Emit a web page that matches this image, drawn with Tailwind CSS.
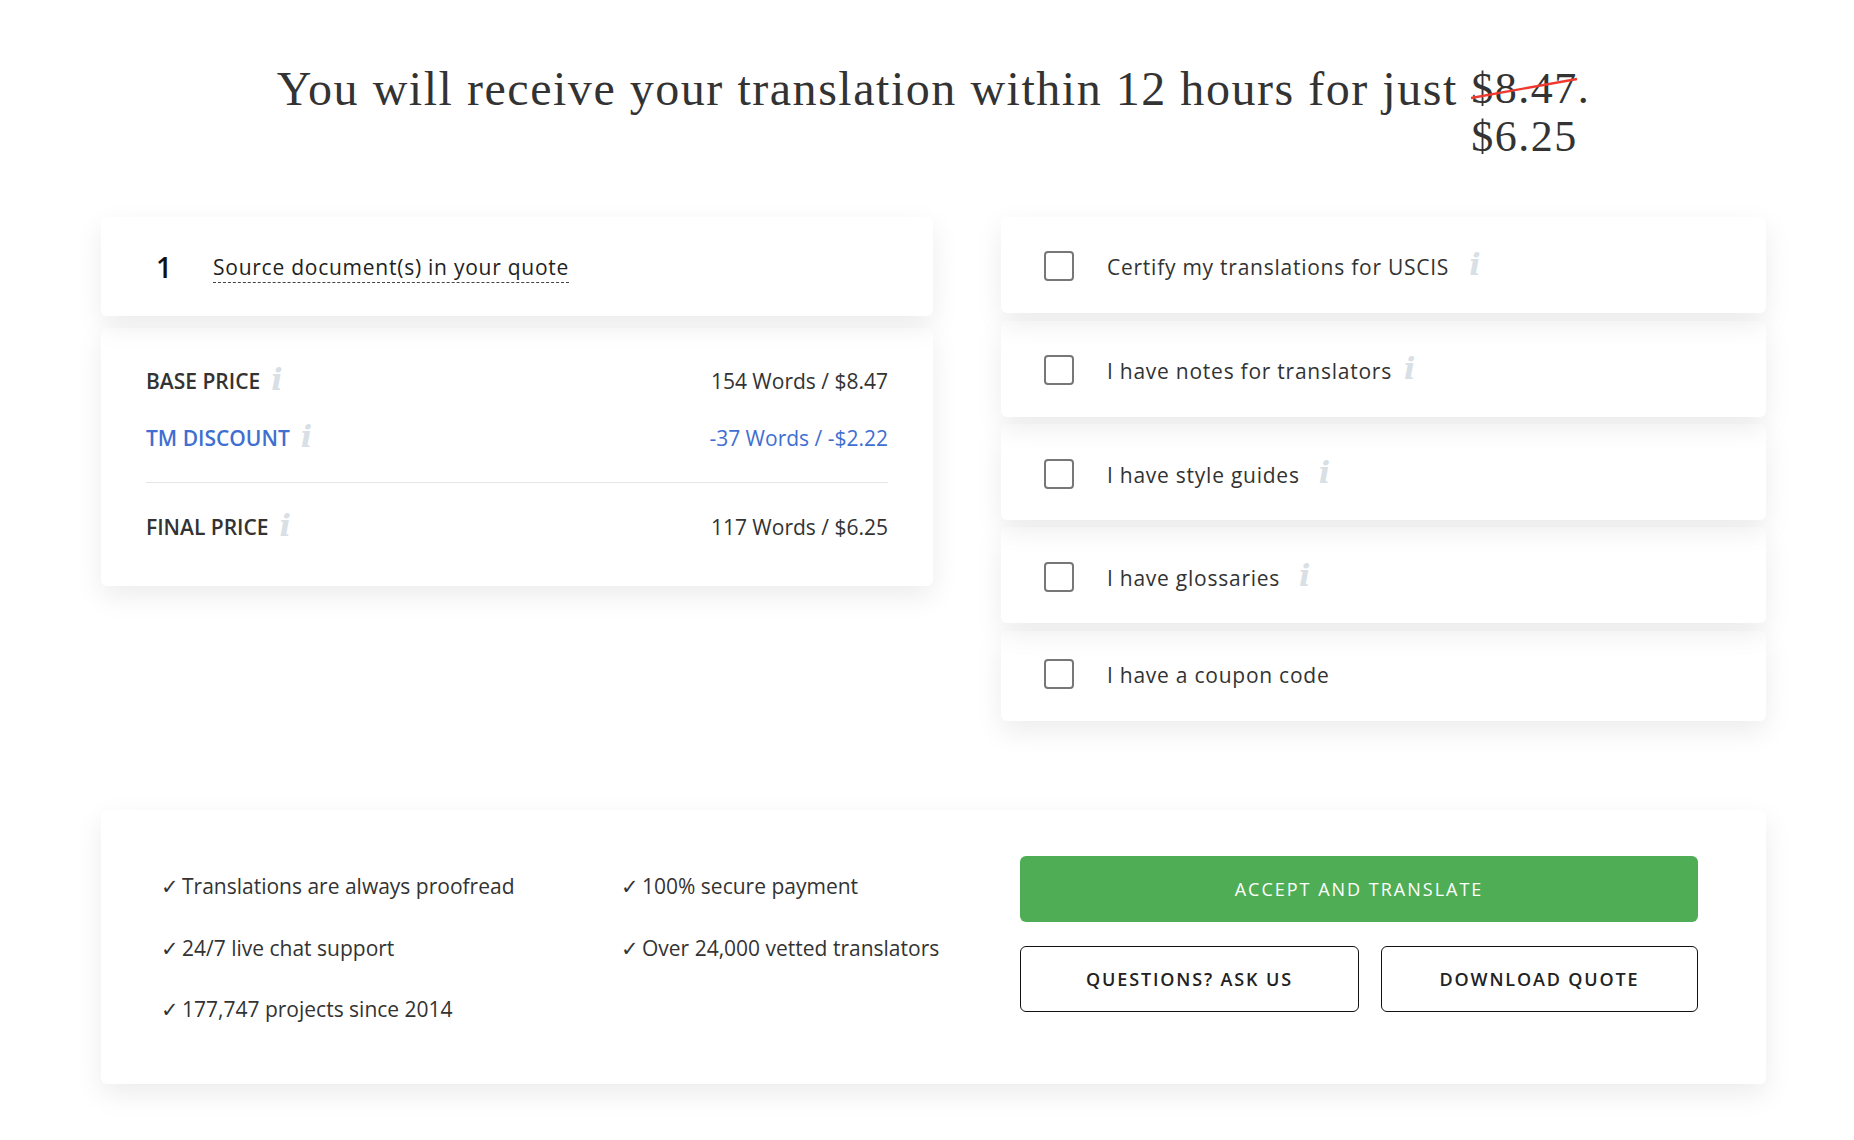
<!DOCTYPE html>
<html lang="en">
<head>
  <meta charset="UTF-8">
  <title>Quote</title>
  <script src="https://cdn.jsdelivr.net/npm/@tailwindcss/browser@4"></script>
</head>
<body class="bg-white text-[#333333] font-['Open_Sans',sans-serif] min-h-screen">
  <div class="w-[1665px] ml-[101px]">
    <!-- heading -->
    <h1 class="pt-[65px] h-[217px] text-center font-['Liberation_Serif',serif] text-[48px] leading-[48px] tracking-[1.53px] text-[#333333]">
      You will receive your translation within 12 hours for just
      <span class="inline-block align-top text-left relative text-[44px] tracking-[1.5px]">
        <span class="block">$8.47.</span>
        <span class="block">$6.25</span>
        <svg class="absolute left-0 top-[12px]" width="110" height="24" viewBox="0 0 110 24"><line x1="0" y1="21" x2="106" y2="2" stroke="#f03a2e" stroke-width="2.4"/></svg>
      </span>
    </h1>

    <!-- two columns -->
    <div class="grid grid-cols-[832px_765px] gap-x-[68px] h-[593px] items-start">
      <div class="flex flex-col gap-[12px]">
        <div class="relative z-[2] h-[99px] bg-white rounded-[6px] shadow-[0_10px_28px_rgba(0,0,0,0.08)] flex items-center pl-[55px]">
          <span class="w-[57px] text-[28px] font-semibold text-[#111111]">1</span>
          <span class="mt-[3px] pb-[1px] text-[21px] tracking-[0.75px] text-[#222222] border-b border-dashed border-[#444444] leading-[28px]">Source document(s) in your quote</span>
        </div>
        <div class="relative z-[1] h-[258px] bg-white rounded-[6px] shadow-[0_10px_28px_rgba(0,0,0,0.08)] px-[45px] pt-[27px] text-[21px]">
          <div class="flex justify-between items-center h-[54px]">
            <span class="font-semibold flex items-center gap-[11px]">BASE PRICE <i class="font-['DejaVu_Serif',serif] font-bold text-[30px] text-[#d8dfe5] leading-none -mt-[4px]">i</i></span>
            <span>154 Words / $8.47</span>
          </div>
          <div class="flex justify-between items-center h-[60px] text-[#3f6fd1]">
            <span class="font-semibold flex items-center gap-[11px]">TM DISCOUNT <i class="font-['DejaVu_Serif',serif] font-bold text-[30px] text-[#d8dfe5] leading-none -mt-[4px]">i</i></span>
            <span>-37 Words / -$2.22</span>
          </div>
          <div class="border-t border-[#e3e5e7] mt-[13px] flex justify-between items-center h-[90px]">
            <span class="font-semibold flex items-center gap-[11px]">FINAL PRICE <i class="font-['DejaVu_Serif',serif] font-bold text-[30px] text-[#d8dfe5] leading-none -mt-[4px]">i</i></span>
            <span>117 Words / $6.25</span>
          </div>
        </div>
      </div>

      <div class="flex flex-col text-[21px] tracking-[0.75px]">
        <label class="relative z-[5] h-[96px] bg-white rounded-[6px] shadow-[0_10px_28px_rgba(0,0,0,0.08)] flex items-center pl-[43px] pt-[2px]">
          <span class="w-[30px] h-[30px] border-2 border-[#777777] rounded-[4px] mr-[33px]"></span>
          <span class="pt-[4px]">Certify my translations for USCIS</span>
          <i class="font-['DejaVu_Serif',serif] font-bold text-[30px] tracking-normal text-[#d8dfe5] leading-none ml-[20px] -mt-[2px]">i</i>
        </label>
        <label class="relative z-[4] mt-[8px] h-[96px] bg-white rounded-[6px] shadow-[0_10px_28px_rgba(0,0,0,0.08)] flex items-center pl-[43px] pt-[2px]">
          <span class="w-[30px] h-[30px] border-2 border-[#777777] rounded-[4px] mr-[33px]"></span>
          <span class="pt-[4px]">I have notes for translators</span>
          <i class="font-['DejaVu_Serif',serif] font-bold text-[30px] tracking-normal text-[#d8dfe5] leading-none ml-[12px] -mt-[2px]">i</i>
        </label>
        <label class="relative z-[3] mt-[7px] h-[96px] bg-white rounded-[6px] shadow-[0_10px_28px_rgba(0,0,0,0.08)] flex items-center pl-[43px] pt-[4px]">
          <span class="w-[30px] h-[30px] border-2 border-[#777777] rounded-[4px] mr-[33px]"></span>
          <span class="pt-[4px]">I have style guides</span>
          <i class="font-['DejaVu_Serif',serif] font-bold text-[30px] tracking-normal text-[#d8dfe5] leading-none ml-[19px] -mt-[2px]">i</i>
        </label>
        <label class="relative z-[2] mt-[7px] h-[96px] bg-white rounded-[6px] shadow-[0_10px_28px_rgba(0,0,0,0.08)] flex items-center pl-[43px] pt-[4px]">
          <span class="w-[30px] h-[30px] border-2 border-[#777777] rounded-[4px] mr-[33px]"></span>
          <span class="pt-[4px]">I have glossaries</span>
          <i class="font-['DejaVu_Serif',serif] font-bold text-[30px] tracking-normal text-[#d8dfe5] leading-none ml-[19px] -mt-[2px]">i</i>
        </label>
        <label class="relative z-[1] mt-[8px] h-[90px] bg-white rounded-[6px] shadow-[0_10px_28px_rgba(0,0,0,0.08)] flex items-center pl-[43px] pb-[4px]">
          <span class="w-[30px] h-[30px] border-2 border-[#777777] rounded-[4px] mr-[33px]"></span>
          <span class="pt-[4px]">I have a coupon code</span>
        </label>
      </div>
    </div>

    <!-- bottom card -->
    <div class="h-[274px] bg-white rounded-[6px] shadow-[0_10px_28px_rgba(0,0,0,0.08)] flex">
      <div class="w-[520px] pl-[60px] pt-[61px] text-[21px] flex flex-col gap-[30px] leading-[31.5px]">
        <span><span class="inline-block w-[21px] text-[21px] leading-none">✓</span>Translations are always proofread</span>
        <span><span class="inline-block w-[21px] text-[21px] leading-none">✓</span>24/7 live chat support</span>
        <span><span class="inline-block w-[21px] text-[21px] leading-none">✓</span>177,747 projects since 2014</span>
      </div>
      <div class="w-[399px] pt-[61px] text-[21px] flex flex-col gap-[30px] leading-[31.5px]">
        <span><span class="inline-block w-[21px] text-[21px] leading-none">✓</span>100% secure payment</span>
        <span><span class="inline-block w-[21px] text-[21px] leading-none">✓</span>Over 24,000 vetted translators</span>
      </div>
      <div class="w-[678px] pt-[46px] flex flex-col gap-[24px] text-[18px] tracking-[2px]">
        <button class="h-[66px] bg-[#4fae55] text-white rounded-[6px] font-medium">ACCEPT AND TRANSLATE</button>
        <div class="grid grid-cols-[339px_317px] gap-x-[22px] tracking-[1.85px]">
          <button class="h-[66px] border border-[#111111] rounded-[6px] text-[#222222] font-semibold">QUESTIONS? ASK US</button>
          <button class="h-[66px] border border-[#111111] rounded-[6px] text-[#222222] font-semibold">DOWNLOAD QUOTE</button>
        </div>
      </div>
    </div>
  </div>
</body>
</html>
